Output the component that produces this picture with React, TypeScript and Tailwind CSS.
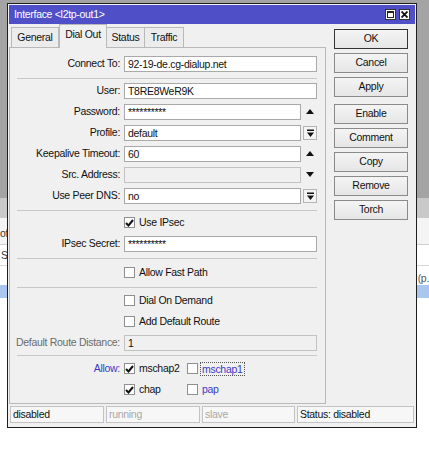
import React from 'react';

const font = { fontFamily: '"Liberation Sans", Arial, sans-serif' };

function UpArrow() {
  return (
    <svg width="8" height="5" viewBox="0 0 8 5" className="block">
      <path d="M0 5 L4 0 L8 5 Z" fill="#111" />
    </svg>
  );
}

function DownArrow() {
  return (
    <svg width="8" height="5" viewBox="0 0 8 5" className="block">
      <path d="M0 0 L4 5 L8 0 Z" fill="#111" />
    </svg>
  );
}

function DropBox() {
  return (
    <div className="flex h-[14px] w-[14px] items-center justify-center border border-[#b4b4b4] bg-[#f4f4f4]">
      <svg width="7" height="8" viewBox="0 0 7 8" className="block">
        <rect x="0" y="0.5" width="7" height="1.5" fill="#111" />
        <path d="M0 3.5 L3.5 8 L7 3.5 Z" fill="#111" />
      </svg>
    </div>
  );
}

function Check({ on }: { on?: boolean }) {
  return (
    <div className="flex h-[11px] w-[11px] shrink-0 items-center justify-center border border-[#8e8f8f] bg-white">
      {on && (
        <svg width="9" height="8" viewBox="0 0 9 8" className="block">
          <path d="M1 4 L3.5 6.5 L8 1" stroke="#111" strokeWidth="2" fill="none" />
        </svg>
      )}
    </div>
  );
}

function Field({ value, disabled, suffix }: { value?: string; disabled?: boolean; suffix?: React.ReactNode }) {
  return (
    <div className="flex flex-1 items-center">
      <div
        className={
          'flex h-[16px] flex-1 items-center border px-[3px] leading-[14px] ' +
          (disabled ? 'border-[#c2c2c2] bg-[#f0f0f0]' : 'border-[#a9a9a9] bg-white')
        }
      >
        {value}
      </div>
      {suffix && <div className="ml-[2px] flex w-[14px] items-center justify-center">{suffix}</div>}
    </div>
  );
}

function Row({ label, labelClass, children }: { label: string; labelClass?: string; children: React.ReactNode }) {
  return (
    <div className="flex h-[21px] items-center">
      <div className={'w-[110px] shrink-0 text-right ' + (labelClass ?? '')}>{label}</div>
      <div className="ml-[4px] mr-[8px] flex flex-1 items-center">{children}</div>
    </div>
  );
}

function CheckRow({ label, on }: { label: string; on?: boolean }) {
  return (
    <div className="flex h-[21px] items-center pl-[114px]">
      <Check on={on} />
      <span className="ml-[4px]">{label}</span>
    </div>
  );
}

function Sep({ className }: { className: string }) {
  return <div className={'ml-[7px] mr-[8px] h-px bg-[#c8c8c8] ' + className} />;
}

const buttons = ['OK', 'Cancel', 'Apply', 'Enable', 'Comment', 'Copy', 'Remove', 'Torch'];

export default function App() {
  return (
    <div className="relative h-[452px] w-[429px] overflow-hidden bg-white text-[10.5px] tracking-[-0.3px] text-[#111]" style={font}>
      {/* desktop behind */}
      <div className="absolute left-0 top-0 h-[198px] w-full bg-[#a4a4a4]" />
      <div className="absolute left-0 top-[198px] h-[20px] w-full bg-[#c9c9c9]" />
      <div className="absolute left-0 top-[218px] h-[26px] w-full bg-[#f4f4f4]" />
      <div className="absolute left-0 top-[226px] text-[#333]">of</div>
      <div className="absolute left-0 top-[244px] h-px w-full bg-[#d0d0d0]" />
      <div className="absolute left-[1px] top-[248px] text-[#333]">S</div>
      <div className="absolute left-0 top-[265px] h-px w-full bg-[#d8d8d8]" />
      <div className="absolute right-[0px] top-[271px] text-[#555]">(p.</div>
      <div className="absolute left-0 top-[285px] h-[13px] w-full bg-[#a9c6ee]" />

      {/* dialog window */}
      <div className="absolute left-[7px] top-[3px] flex h-[425px] w-[410px] flex-col border border-[#1e1e1e] bg-[#f0f0f0]">
        <div className="mx-[1px] mt-[1px] flex h-[19px] items-center justify-between bg-[#4f4fc8] pl-[5px] pr-[5px] text-white">
          <span>Interface &lt;l2tp-out1&gt;</span>
          <div className="flex gap-[3px]">
            <div className="flex h-[11px] w-[11px] items-center justify-center border border-[#333] bg-white">
              <div className="h-[7px] w-[7px] border border-[#222] border-t-2" />
            </div>
            <div className="flex h-[11px] w-[11px] items-center justify-center border border-[#333] bg-white">
              <svg width="7" height="7" viewBox="0 0 7 7" className="block">
                <path d="M0.5 0.5 L6.5 6.5 M6.5 0.5 L0.5 6.5" stroke="#111" strokeWidth="1.8" />
              </svg>
            </div>
          </div>
        </div>

        <div className="ml-[1px] flex items-start">
          {/* left: tabs + panel */}
          <div className="w-[317px]">
            <div className="flex h-[23px] items-end pl-[2px]">
              <div className="flex h-[20px] w-[48px] items-center justify-center border border-b-0 border-[#b9b9b9] bg-[#ececec]">General</div>
              <div className="relative z-10 -mb-px flex h-[24px] w-[48px] items-center justify-center border border-b-0 border-[#b9b9b9] bg-[#f0f0f0] pb-[3px]">Dial Out</div>
              <div className="flex h-[20px] w-[38px] items-center justify-center border border-b-0 border-l-0 border-[#b9b9b9] bg-[#ececec]">Status</div>
              <div className="flex h-[20px] w-[39px] items-center justify-center border border-b-0 border-l-0 border-[#b9b9b9] bg-[#ececec]">Traffic</div>
            </div>
            <div className="flex h-[357px] flex-col border border-[#b9b9b9] bg-[#f0f0f0] pt-[5px]">
              <Row label="Connect To:">
                <Field value="92-19-de.cg-dialup.net" />
              </Row>
              <Sep className="mb-[1px] mt-[4px]" />
              <Row label="User:">
                <Field value="T8RE8WeR9K" />
              </Row>
              <Row label="Password:">
                <Field value="**********" suffix={<UpArrow />} />
              </Row>
              <Row label="Profile:">
                <Field value="default" suffix={<DropBox />} />
              </Row>
              <Row label="Keepalive Timeout:">
                <Field value="60" suffix={<UpArrow />} />
              </Row>
              <Row label="Src. Address:">
                <Field disabled suffix={<DownArrow />} />
              </Row>
              <Row label="Use Peer DNS:">
                <Field value="no" suffix={<DropBox />} />
              </Row>
              <Sep className="mb-[1px] mt-[4px]" />
              <CheckRow label="Use IPsec" on />
              <Row label="IPsec Secret:">
                <Field value="**********" />
              </Row>
              <Sep className="mb-[3px] mt-[4px]" />
              <CheckRow label="Allow Fast Path" />
              <Sep className="mb-[2px] mt-[4px]" />
              <CheckRow label="Dial On Demand" />
              <CheckRow label="Add Default Route" />
              <Row label="Default Route Distance:" labelClass="text-[#6b6b6b]">
                <Field value="1" disabled />
              </Row>
              <Sep className="mb-[2px] mt-[2px]" />
              <div className="flex h-[21px] items-center">
                <div className="w-[110px] shrink-0 text-right text-[#3a3ac8]">Allow:</div>
                <div className="ml-[4px] flex w-[63px] items-center">
                  <Check on />
                  <span className="ml-[4px]">mschap2</span>
                </div>
                <div className="flex items-center">
                  <Check />
                  <span className="ml-[2px] border border-dotted border-[#555] px-[1px] leading-[12px] text-[#3a3ac8]">mschap1</span>
                </div>
              </div>
              <div className="flex h-[21px] items-center pl-[114px]">
                <div className="flex w-[63px] items-center">
                  <Check on />
                  <span className="ml-[4px]">chap</span>
                </div>
                <Check />
                <span className="ml-[4px] text-[#3a3ac8]">pap</span>
              </div>
            </div>
          </div>

          {/* right: buttons */}
          <div className="ml-[8px] mt-[5px] flex w-[74px] flex-col">
            {buttons.map((b, i) => (
              <div
                key={b}
                className={
                  'flex h-[20px] items-center justify-center bg-gradient-to-b from-[#f4f4f4] to-[#e6e6e6] ' +
                  (i === 0 ? 'border border-[#333] ' : 'border border-[#8a8a8a] ') +
                  (i === 3 ? 'mt-[7px]' : i === 0 ? '' : 'mt-[4px]')
                }
              >
                {b}
              </div>
            ))}
          </div>
        </div>

        <div className="ml-[2px] mt-[2px] flex h-[17px] gap-[2px]">
          <div className="flex w-[94px] items-center border border-[#c3c3c3] bg-[#f7f7f7] px-[2px]">disabled</div>
          <div className="flex w-[94px] items-center border border-[#c3c3c3] bg-[#f7f7f7] px-[2px] text-[#a8a8a8]">running</div>
          <div className="flex w-[93px] items-center border border-[#c3c3c3] bg-[#f7f7f7] px-[2px] text-[#a8a8a8]">slave</div>
          <div className="flex w-[117px] items-center border border-[#c3c3c3] bg-[#f7f7f7] px-[2px]">Status: disabled</div>
        </div>
      </div>
    </div>
  );
}
